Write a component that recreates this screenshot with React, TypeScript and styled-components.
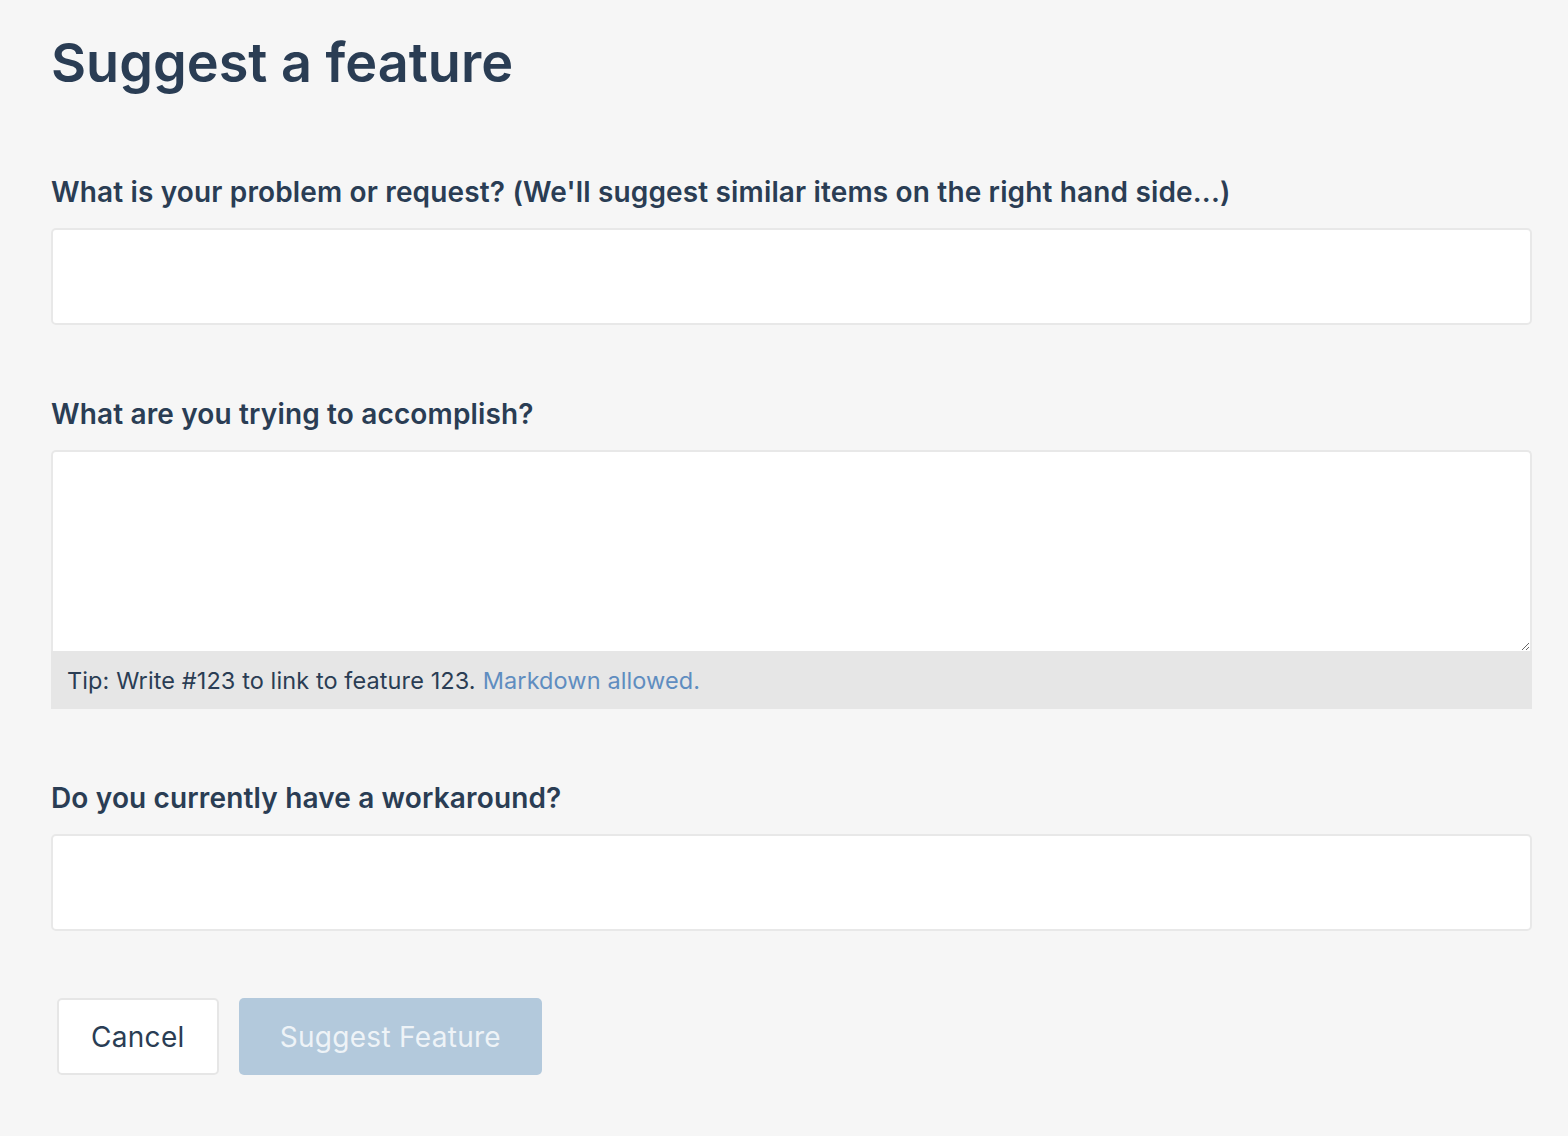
import styled, { createGlobalStyle } from 'styled-components'

const GlobalStyle = createGlobalStyle`
  html, body {
    margin: 0;
    padding: 0;
    background: #f6f6f6;
  }

  body {
    font-family: Inter, "Noto Sans", sans-serif;
    color: #2a3d54;
  }
`

const Page = styled.main`
  padding: 29px 36px 60px 51px;
`

const Title = styled.h1`
  font-size: 54px;
  font-weight: 600;
  line-height: 68px;
  letter-spacing: 0;
  margin: 0 0 77px;
  color: #2a3d54;
`

const Form = styled.form`
  display: flex;
  flex-direction: column;
`

const Field = styled.div`
  display: flex;
  flex-direction: column;
  margin-bottom: 71px;
`

const Label = styled.label`
  font-size: 28px;
  font-weight: 600;
  line-height: 36px;
  letter-spacing: 0.15px;
  margin-bottom: 18px;
  color: #2a3d54;
`

const TextInput = styled.input`
  box-sizing: border-box;
  height: 97px;
  width: 100%;
  padding: 0 20px;
  background: #fff;
  border: 2px solid #e8e8e8;
  border-radius: 5px;
  font: inherit;
  font-size: 28px;
  color: #2a3d54;
  outline: none;
`

const TextArea = styled.textarea`
  box-sizing: border-box;
  display: block;
  height: 201px;
  width: 100%;
  padding: 16px 20px;
  background: #fff;
  border: 2px solid #e8e8e8;
  border-bottom: none;
  border-radius: 5px 5px 0 0;
  font: inherit;
  font-size: 28px;
  color: #2a3d54;
  resize: vertical;
  outline: none;
`

const Tip = styled.div`
  height: 58px;
  display: flex;
  align-items: center;
  padding: 0 16px;
  background: #e6e6e6;
  font-size: 23.5px;
  letter-spacing: 0.1px;
  color: #2a3d54;
`

const TipLink = styled.a`
  color: #5f8dc0;
  text-decoration: none;
  margin-left: 7px;
`

const Actions = styled.div`
  display: flex;
  gap: 20px;
  margin-top: -4px;
  padding-left: 6px;
`

const Button = styled.button<{ $primary?: boolean }>`
  box-sizing: border-box;
  height: 77px;
  padding: 0 ${p => (p.$primary ? '41px' : '32px')};
  border-radius: 5px;
  font-family: Inter, "Noto Sans", sans-serif;
  font-size: 28px;
  font-weight: 400;
  letter-spacing: 0.3px;
  cursor: pointer;
  background: ${p => (p.$primary ? '#b3c9dc' : '#fff')};
  color: ${p => (p.$primary ? '#eef3f7' : '#2a3d54')};
  border: ${p => (p.$primary ? 'none' : '2px solid #e6e6e6')};
`

export default function App() {
  return (
    <>
      <GlobalStyle />
      <Page>
        <Title>Suggest a feature</Title>
        <Form onSubmit={e => e.preventDefault()}>
          <Field>
            <Label htmlFor="problem">
              What is your problem or request? (We'll suggest similar items on the right hand side...)
            </Label>
            <TextInput id="problem" type="text" />
          </Field>
          <Field>
            <Label htmlFor="goal">What are you trying to accomplish?</Label>
            <TextArea id="goal" />
            <Tip>
              Tip: Write #123 to link to feature 123.
              <TipLink href="#">Markdown allowed.</TipLink>
            </Tip>
          </Field>
          <Field>
            <Label htmlFor="workaround">Do you currently have a workaround?</Label>
            <TextInput id="workaround" type="text" />
          </Field>
          <Actions>
            <Button type="button">Cancel</Button>
            <Button type="submit" $primary disabled>
              Suggest Feature
            </Button>
          </Actions>
        </Form>
      </Page>
    </>
  )
}
